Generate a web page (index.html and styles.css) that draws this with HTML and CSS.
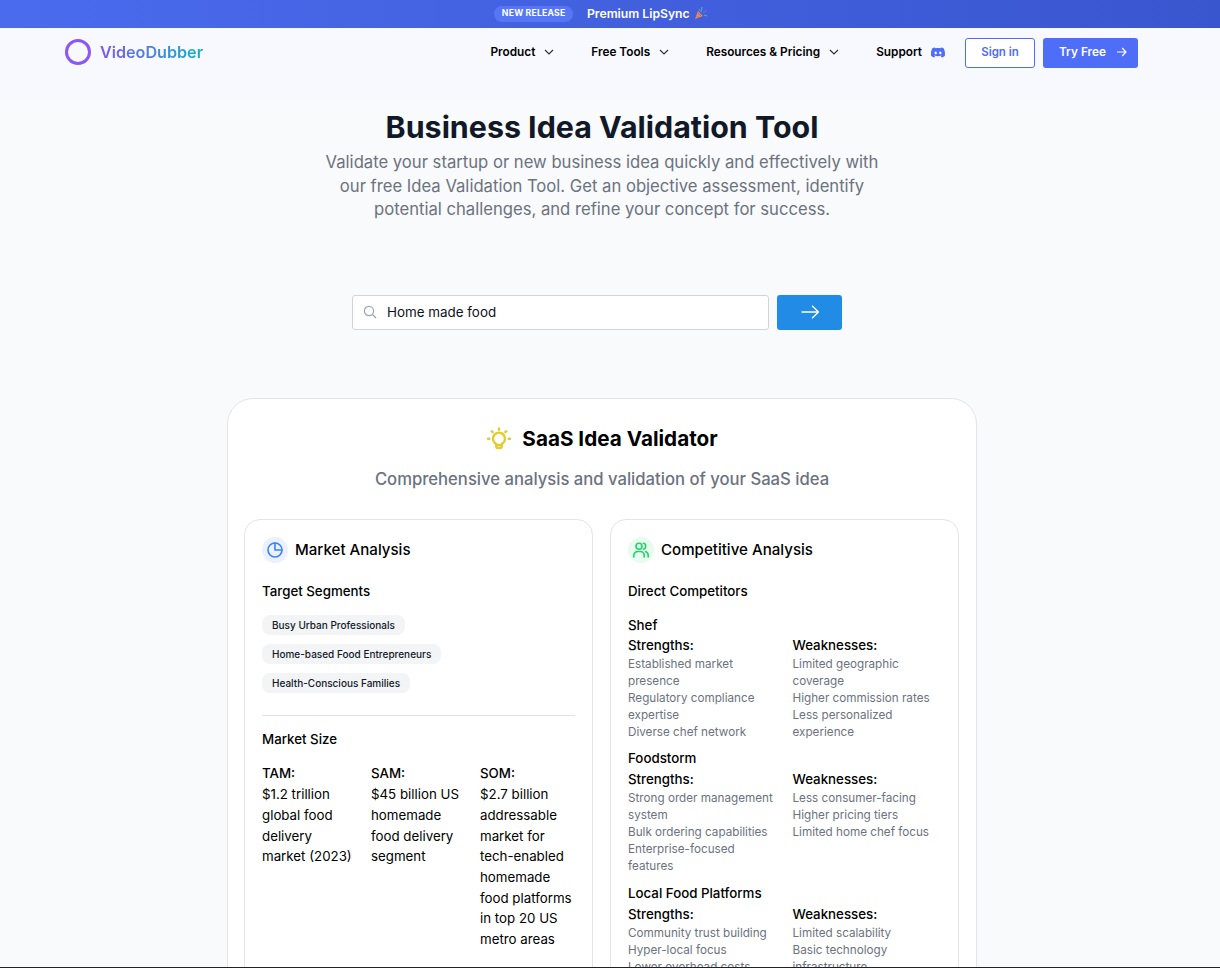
FILE: index.html
```html
<!DOCTYPE html>
<html lang="en">
<head>
  <meta charset="UTF-8" />
  <title>Business Idea Validation Tool</title>
  <link rel="stylesheet" href="styles.css">
</head>
<body>
  <div class="promo">
    <span class="promo-tag">NEW RELEASE</span>
    <span class="promo-text">Premium LipSync</span>
    <svg class="promo-icon" width="14" height="14" viewBox="0 0 14 14">
      <path d="M1 13l3-8 5 5z" fill="#d9915f"/>
      <path d="M3 10l2 2M4 7l3 3" stroke="#c05a8c" stroke-width="1"/>
      <path d="M7 6l1-5" stroke="#2fa6e8" stroke-width="1.4"/>
      <path d="M9 7l4-3" stroke="#7c5ce0" stroke-width="1.2"/>
      <path d="M5 3l1 2" stroke="#e5508a" stroke-width="1.2"/>
      <path d="M10 9l3 1" stroke="#3fb8c9" stroke-width="1.2"/>
    </svg>
  </div>

  <header class="site-header">
    <a class="logo">
      <span class="logo-ring"></span>
      <span class="logo-text">VideoDubber</span>
    </a>
    <nav class="nav">
      <a class="nav-item nav-link">Product
        <svg class="chev" width="10" height="6" viewBox="0 0 10 6"><path d="M1 1l4 4 4-4"/></svg>
      </a>
      <a class="nav-item nav-link">Free Tools
        <svg class="chev" width="10" height="6" viewBox="0 0 10 6"><path d="M1 1l4 4 4-4"/></svg>
      </a>
      <a class="nav-item nav-link">Resources &amp; Pricing
        <svg class="chev" width="10" height="6" viewBox="0 0 10 6"><path d="M1 1l4 4 4-4"/></svg>
      </a>
      <a class="nav-item nav-support">Support
        <svg width="14" height="11" viewBox="0 0 14 11"><path fill="#4f6ef7" fill-rule="evenodd" d="M4 .4C3 .6 2.100 .9 1.400 1.300 .3 3 -.2 5.600 .1 8.700c1 .9 2.200 1.600 3.300 1.900l.8-1.300-1.100-.6.300-.3c2.300 1 5 1 7.200 0l.3.300-1.100.6.800 1.300c1.100-.3 2.300-1 3.300-1.900.3-3.200-.3-5.700-1.300-7.400C11.900 .9 11 .6 10 .4l-.4.800c-1.700-.2-3.500-.2-5.200 0zM4.700 4.600c.7 0 1.200.6 1.200 1.300S5.400 7.200 4.700 7.200 3.500 6.600 3.500 5.900s.5-1.300 1.200-1.300zm4.600 0c.7 0 1.200.6 1.200 1.300s-.5 1.300-1.200 1.300-1.200-.6-1.200-1.300.5-1.300 1.200-1.300z"/></svg>
      </a>
      <a class="btn-signin">Sign in</a>
      <a class="btn-try">Try Free
        <svg width="11" height="10" viewBox="0 0 11 10"><path d="M1 5h9M6.200 1L10 5 6.200 9"/></svg>
      </a>
    </nav>
  </header>

  <main class="page">
    <section class="hero">
      <h1>Business Idea Validation Tool</h1>
      <p>Validate your startup or new business idea quickly and effectively with our free Idea Validation Tool. Get an objective assessment, identify potential challenges, and refine your concept for success.</p>
    </section>

    <form class="search">
      <div class="search-box">
        <svg width="14" height="14" viewBox="0 0 14 14"><circle cx="6" cy="6" r="4.600"/><path d="M9.500 9.500L13 13"/></svg>
        <span>Home made food</span>
      </div>
      <button type="button" class="search-go">
        <svg width="18" height="14" viewBox="0 0 18 14"><path d="M.5 7h17M11 .7L17.500 7 11 13.300"/></svg>
      </button>
    </form>

    <section class="result">
      <div class="result-title">
        <svg width="26" height="26" viewBox="0 0 26 26" class="bulb">
          <path d="M9.500 17.500a6 6 0 1 1 7 0c-.6.500-.8 1-.8 1.500v1.500a1.500 1.500 0 0 1-1.500 1.500h-2.400a1.500 1.500 0 0 1-1.500-1.500V19c0-.5-.2-1-.8-1.500zM10.500 19h5"/>
          <path d="M13 2.500v1.200M5.700 5.300l1 .8M20.300 5.300l-1 .8M2 12.700h1.300M22.700 12.700H24"/>
        </svg>
        <h2>SaaS Idea Validator</h2>
      </div>
      <p class="result-sub">Comprehensive analysis and validation of your SaaS idea</p>

      <div class="result-grid">
        <div class="panel">
          <div class="panel-head">
            <span class="panel-icon blue">
              <svg width="16" height="16" viewBox="0 0 16 16"><circle cx="8" cy="8" r="7"/><path d="M8 1v7h7"/></svg>
            </span>
            <h3>Market Analysis</h3>
          </div>
          <h4 class="sub-head">Target Segments</h4>
          <div class="chips">
            <span class="chip">Busy Urban Professionals</span>
            <span class="chip">Home-based Food Entrepreneurs</span>
            <span class="chip">Health-Conscious Families</span>
          </div>
          <hr class="rule">
          <h4 class="sub-head">Market Size</h4>
          <div class="sizes">
            <div><b>TAM:</b><p>$1.2 trillion global food delivery market (2023)</p></div>
            <div><b>SAM:</b><p>$45 billion US homemade food delivery segment</p></div>
            <div><b>SOM:</b><p>$2.7 billion addressable market for tech-enabled homemade food platforms in top 20 US metro areas</p></div>
          </div>
        </div>

        <div class="panel">
          <div class="panel-head">
            <span class="panel-icon green">
              <svg width="16" height="16" viewBox="0 0 16 16"><circle cx="6" cy="4.200" r="3"/><path d="M.8 15v-1.500a4 4 0 0 1 4-4h2.400a4 4 0 0 1 4 4V15M10.500 1.300a3 3 0 0 1 0 5.800M12.600 9.600a4 4 0 0 1 2.600 3.800V15"/></svg>
            </span>
            <h3>Competitive Analysis</h3>
          </div>
          <h4 class="sub-head">Direct Competitors</h4>

          <div class="rival">
            <h5>Shef</h5>
            <div class="rival-cols">
              <div><h6>Strengths:</h6><ul><li>Established market presence</li><li>Regulatory compliance expertise</li><li>Diverse chef network</li></ul></div>
              <div><h6>Weaknesses:</h6><ul><li>Limited geographic coverage</li><li>Higher commission rates</li><li>Less personalized experience</li></ul></div>
            </div>
          </div>
          <div class="rival">
            <h5>Foodstorm</h5>
            <div class="rival-cols">
              <div><h6>Strengths:</h6><ul><li>Strong order management system</li><li>Bulk ordering capabilities</li><li>Enterprise-focused features</li></ul></div>
              <div><h6>Weaknesses:</h6><ul><li>Less consumer-facing</li><li>Higher pricing tiers</li><li>Limited home chef focus</li></ul></div>
            </div>
          </div>
          <div class="rival">
            <h5>Local Food Platforms</h5>
            <div class="rival-cols">
              <div><h6>Strengths:</h6><ul><li>Community trust building</li><li>Hyper-local focus</li><li>Lower overhead costs</li></ul></div>
              <div><h6>Weaknesses:</h6><ul><li>Limited scalability</li><li>Basic technology infrastructure</li></ul></div>
            </div>
          </div>
        </div>
      </div>
    </section>
  </main>
  <div class="bottom-line"></div>
</body>
</html>
```

FILE: styles.css
```css
* {
  box-sizing: border-box;
}
html,
body {
  margin: 0;
  height: 968px;
  overflow: hidden;
}
body {
  position: relative;
  font-family: Inter, "Noto Sans", sans-serif;
  background: #f9fafb;
  color: #000;
}
h1, h2, h3, h4, h5, h6, p, ul {
  margin: 0;
  padding: 0;
  font-weight: 500;
}
ul {
  list-style: none;
}
.promo {
  height: 28px;
  display: flex;
  align-items: center;
  justify-content: center;
  gap: 14px;
  padding-right: 18px;
  background: linear-gradient(90deg, #4a6bee, #3a56cf);
  color: #fff;
}
.promo-tag {
  height: 16px;
  padding: 0 7.500px;
  border-radius: 8px;
  background: #5676f5;
  font-size: 8.700px;
  font-weight: 700;
  letter-spacing: .2px;
  line-height: 15px;
}
.promo-text {
  margin-top: -2px;
  font-size: 12.200px;
  font-weight: 600;
}
.promo-icon {
  margin: -3px 0 0 -10px;
}
.site-header {
  width: 1204px;
  height: 70px;
  padding: 10px 66px 0 65px;
  display: flex;
  justify-content: space-between;
  align-items: flex-start;
}
body::before {
  content: "";
  position: absolute;
  top: 28px;
  left: 0;
  right: 0;
  height: 70px;
  background: #f7f9ff;
  z-index: -1;
}
.logo {
  height: 30px;
  margin-top: -1px;
  display: flex;
  align-items: center;
  gap: 9px;
}
.logo-ring {
  width: 26px;
  height: 26px;
  border: 3px solid #8b57f6;
  border-radius: 50%;
}
.logo-text {
  font-size: 16.150px;
  font-weight: 600;
  background: linear-gradient(90deg, #8057f0, #12b0c8);
  -webkit-background-clip: text;
  background-clip: text;
  color: transparent;
}
.nav {
  display: flex;
  align-items: center;
  height: 30px;
  font-size: 11.800px;
  font-weight: 600;
}
.nav-item {
  display: flex;
  align-items: center;
  margin-top: -2px;
}
.chev {
  fill: none;
  stroke: #333;
  stroke-width: 1.200;
  margin-left: 9px;
}
.nav-link {
  margin-right: 37px;
}
.nav-support {
  margin-right: 20px;
  gap: 9px;
}
.btn-signin {
  width: 70px;
  height: 30px;
  border: 1px solid #4f6ef7;
  border-radius: 3px;
  background: #fff;
  color: #4f6ef7;
  text-align: center;
  font-size: 11.500px;
  line-height: 26px;
  margin-right: 8px;
}
.btn-try {
  width: 95px;
  height: 30px;
  padding: 0 0 2px 16px;
  border-radius: 3px;
  background: #4f6ef7;
  color: #fff;
  display: flex;
  align-items: center;
  gap: 10px;
}
.btn-try svg {
  fill: none;
  stroke: #fff;
  stroke-width: 1.200;
}
.page {
  width: 1204px;
}
.hero {
  text-align: center;
  padding-top: 10px;
}
.hero h1 {
  font-size: 30.400px;
  font-weight: 700;
  line-height: 38px;
  color: #111827;
}
.hero p {
  width: 570px;
  margin: 5px auto 0;
  font-size: 16.650px;
  line-height: 23.500px;
  font-weight: 400;
  color: #6b7280;
}
.search {
  display: flex;
  justify-content: center;
  gap: 8px;
  margin-top: 73px;
  padding-right: 10px;
}
.search-box {
  width: 417px;
  height: 35px;
  display: flex;
  align-items: center;
  gap: 10px;
  padding-left: 10px;
  background: #fff;
  border: 1px solid #d1d5db;
  border-radius: 3px;
  font-size: 13.400px;
  color: #0b1224;
}
.search-box svg {
  fill: none;
  stroke: #9ca3af;
  stroke-width: 1.200;
}
.search-go {
  width: 65px;
  height: 35px;
  padding: 0;
  border: none;
  border-radius: 3px;
  background: #228be6;
  display: flex;
  align-items: center;
  justify-content: center;
}
.search-go svg {
  fill: none;
  stroke: #fff;
  stroke-width: 1.300;
}
.result {
  width: 750px;
  height: 700px;
  margin: 68px auto 0;
  padding: 0 16px;
  background: #fff;
  border: 1px solid #e2e4ea;
  border-radius: 26px;
}
.result-title {
  display: flex;
  align-items: center;
  justify-content: center;
  gap: 10px;
  padding-top: 27px;
}
.result-title h2 {
  font-size: 20.700px;
  font-weight: 700;
  line-height: 26px;
}
.bulb {
  fill: none;
  stroke: #e0cd2e;
  stroke-width: 2.400;
  stroke-linecap: round;
  stroke-linejoin: round;
}
.result-sub {
  margin-top: 15px;
  text-align: center;
  font-size: 16.650px;
  line-height: 24px;
  font-weight: 500;
  color: #6b7280;
}
.result-grid {
  display: grid;
  grid-template-columns: 349px 349px;
  column-gap: 17px;
  margin-top: 28px;
}
.panel {
  height: 600px;
  padding: 17px;
  border: 1px solid #e2e4ea;
  border-radius: 16px;
  background: #fff;
}
.panel-head {
  display: flex;
  align-items: center;
  gap: 7px;
  height: 26px;
}
.panel-head h3 {
  font-size: 15.100px;
  font-weight: 450;
}
.panel-icon {
  width: 26px;
  height: 26px;
  border-radius: 50%;
  display: flex;
  align-items: center;
  justify-content: center;
}
.panel-icon svg {
  fill: none;
  stroke-width: 1.600;
  stroke-linecap: round;
  stroke-linejoin: round;
}
.panel-icon.blue {
  background: #ebf1ff;
}
.panel-icon.blue svg {
  stroke: #3b82f6;
}
.panel-icon.green {
  background: #e8fbef;
}
.panel-icon.green svg {
  stroke: #22d36b;
}
.sub-head {
  margin-top: 18px;
  font-size: 13.300px;
  line-height: 20px;
  font-weight: 450;
}
.chips {
  display: flex;
  flex-direction: column;
  align-items: flex-start;
  gap: 9px;
  margin-top: 14px;
}
.chip {
  height: 20px;
  padding: 0 10px;
  border-radius: 8px;
  background: #f3f4f6;
  font-size: 10px;
  line-height: 20px;
  font-weight: 500;
  color: #111827;
}
.rule {
  margin: 22px 0 0;
  border: none;
  border-top: 1px solid #e2e4ea;
}
.rule + .sub-head {
  margin-top: 13px;
}
.sizes {
  display: grid;
  grid-template-columns: 93px 93px 1fr;
  column-gap: 16px;
  margin-top: 14px;
  font-size: 13.300px;
  line-height: 20.700px;
}
.sizes b {
  font-weight: 450;
}
.sizes p {
  margin-top: 1px;
  font-weight: 400;
}
.rival {
  margin-top: 14px;
}
.rival + .rival {
  margin-top: 7.500px;
}
.rival + .rival h5 {
  line-height: 21px;
}
.rival h5 {
  font-size: 13.300px;
  line-height: 20px;
  font-weight: 450;
}
.rival-cols {
  display: grid;
  grid-template-columns: repeat(2, 1fr);
  column-gap: 16px;
}
.rival h6 {
  font-size: 13.300px;
  line-height: 21px;
  font-weight: 450;
}
.rival li {
  font-size: 11.700px;
  line-height: 17px;
  font-weight: 400;
  color: #6b7280;
}
.bottom-line {
  position: absolute;
  left: 0;
  right: 0;
  bottom: 0;
  height: 1px;
  background: #222;
}
```
